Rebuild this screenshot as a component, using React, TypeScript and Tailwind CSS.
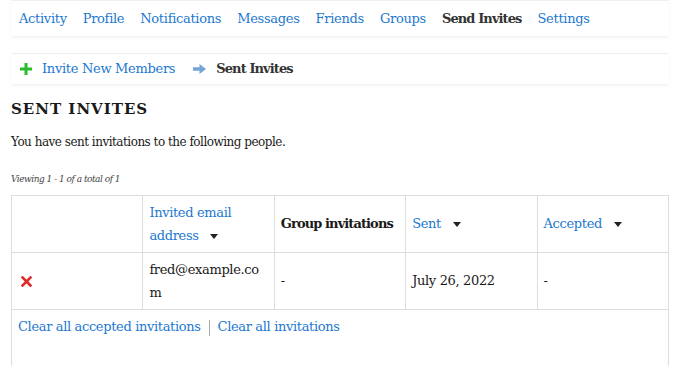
import React from "react";

const font = { fontFamily: '"DejaVu Serif", "Liberation Serif", serif' };

function Caret() {
  return (
    <svg width="8" height="5" viewBox="0 0 8 5" className="inline-block ml-[8px] align-middle">
      <path d="M0 0 L8 0 L4 5 Z" fill="#222" />
    </svg>
  );
}

export default function App() {
  const nav = ["Activity", "Profile", "Notifications", "Messages", "Friends", "Groups", "Send Invites", "Settings"];
  return (
    <div className="w-[680px] h-[366px] overflow-hidden bg-white text-[#222] px-[11px]" style={font}>
      {/* Main nav */}
      <div className="h-[36px] flex items-center gap-[16px] px-[8px] border-t border-[#f0f0f0] shadow-[0_2px_3px_rgba(0,0,0,0.05)] text-[13px] tracking-[-0.3px]">
        {nav.map((n) =>
          n === "Send Invites" ? (
            <span key={n} className="font-bold text-[#333] tracking-[-0.9px]">{n}</span>
          ) : (
            <a key={n} className="text-[#1c78cf]">{n}</a>
          )
        )}
      </div>

      {/* Sub nav */}
      <div className="mt-[17px] h-[31px] flex items-center px-[9px] border-t border-[#f0f0f0] shadow-[0_2px_3px_rgba(0,0,0,0.05)] text-[13px] tracking-[-0.3px]">
        <svg width="12" height="12" viewBox="0 0 12 12">
          <path d="M4.5 0h3v4.5H12v3H7.5V12h-3V7.5H0v-3h4.5z" fill="#2bbd2b" />
        </svg>
        <a className="text-[#1c78cf] ml-[10px]">Invite New Members</a>
        <svg width="13" height="10" viewBox="0 0 13 10" className="ml-[18px]">
          <path d="M0 3.2h6.5V0L13 5 6.5 10V6.8H0z" fill="#74a4d4" />
        </svg>
        <span className="font-bold text-[#333] ml-[10px] tracking-[-0.9px]">Sent Invites</span>
      </div>

      <h2 className="mt-[13px] text-[15px] font-bold tracking-[1px] leading-[24px] text-[#1a1a1a]">SENT INVITES</h2>
      <p className="mt-[11px] text-[12px] leading-[20px] tracking-[-0.5px] text-[#1a1a1a]">You have sent invitations to the following people.</p>
      <p className="mt-[20px] text-[9px] italic text-[#444] leading-[14px] tracking-[-0.5px]">Viewing 1 - 1 of a total of 1</p>

      <table className="mt-[9px] w-full table-fixed border-collapse text-[13px] tracking-[-0.35px] text-[#1a1a1a]">
        <tbody>
          <tr className="h-[57px]">
            <td className="border border-[#ddd]"></td>
            <td className="border border-[#ddd] px-[6px] leading-[23px] text-[#1c78cf]">
              Invited email address <Caret />
            </td>
            <td className="border border-[#ddd] px-[6px] font-bold tracking-[-0.9px]">Group invitations</td>
            <td className="border border-[#ddd] px-[6px] text-[#1c78cf]">
              Sent <Caret />
            </td>
            <td className="border border-[#ddd] px-[6px] text-[#1c78cf]">
              Accepted <Caret />
            </td>
          </tr>
          <tr className="h-[57px]">
            <td className="border border-[#ddd] px-[9px]">
              <svg width="11" height="11" viewBox="0 0 11 11">
                <path d="M1.5 1.5L9.5 9.5M9.5 1.5L1.5 9.5" stroke="#de2a2a" strokeWidth="2.6" strokeLinecap="square" />
              </svg>
            </td>
            <td className="border border-[#ddd] px-[6px] leading-[23px] break-all">fred@example.com</td>
            <td className="border border-[#ddd] px-[6px]">-</td>
            <td className="border border-[#ddd] px-[6px]">July 26, 2022</td>
            <td className="border border-[#ddd] px-[6px]">-</td>
          </tr>
          <tr className="h-[57px]">
            <td colSpan={5} className="border border-[#ddd] px-[6px] pt-[7px] align-top">
              <a className="text-[#1c78cf]">Clear all accepted invitations</a>
              <span className="inline-block w-px h-[16px] bg-[#aaa] mx-[8px] align-middle"></span>
              <a className="text-[#1c78cf]">Clear all invitations</a>
            </td>
          </tr>
        </tbody>
      </table>
    </div>
  );
}
